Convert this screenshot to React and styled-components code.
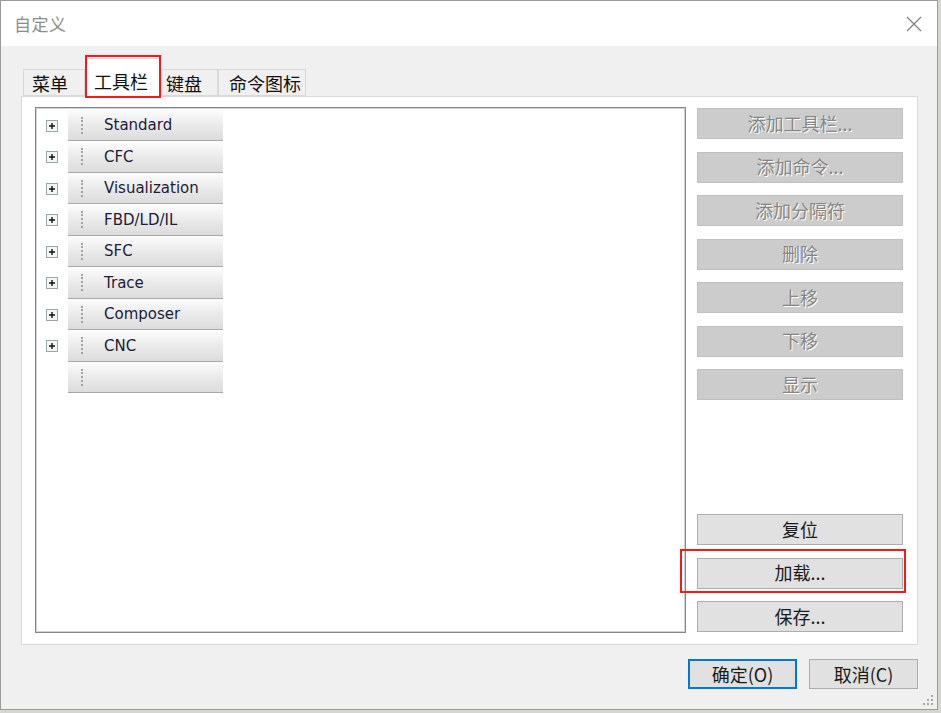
import React from "react";
import styled, { createGlobalStyle } from "styled-components";

const tabs = [
  { label: "菜单", width: 62, pad: 8 },
  { label: "工具栏", width: 76, pad: 8, active: true },
  { label: "键盘", width: 57, pad: 4 },
  { label: "命令图标", width: 88, pad: 10 },
];
const toolbars = ["Standard", "CFC", "Visualization", "FBD/LD/IL", "SFC", "Trace", "Composer", "CNC", ""];
const topActions = ["添加工具栏...", "添加命令...", "添加分隔符", "删除", "上移", "下移", "显示"];

export default function App() {
  return (
    <>
      <GlobalStyle />
      <Window>
        <TitleBar>
          <Title>自定义</Title>
          <CloseIcon viewBox="0 0 16 16">
            <path d="M1 1 L15 15 M15 1 L1 15" stroke="#7a7a7a" strokeWidth="1.1" fill="none" />
          </CloseIcon>
        </TitleBar>
        <Body>
          <TabRow>
            {tabs.map((t) => (
              <Tab key={t.label} $active={t.active} $width={t.width} $pad={t.pad}>
                {t.label}
                {t.active && <Highlight $inset="-4px -1px -1px -1px" />}
              </Tab>
            ))}
          </TabRow>
          <Panel>
            <TreeBox>
              {toolbars.map((name, i) => (
                <TreeRow key={i}>
                  <Expander>{name && <PlusIcon />}</Expander>
                  <ToolbarBar>
                    <Grip />
                    <BarLabel>{name}</BarLabel>
                  </ToolbarBar>
                </TreeRow>
              ))}
            </TreeBox>
            <ActionColumn>
              <ActionGroup>
                {topActions.map((label) => (
                  <ActionButton key={label} disabled>
                    {label}
                  </ActionButton>
                ))}
              </ActionGroup>
              <ActionGroup>
                <ActionButton>复位</ActionButton>
                <ActionButton>
                  加载...
                  <Highlight $inset="-10px -4px -5px -18px" />
                </ActionButton>
                <ActionButton>保存...</ActionButton>
              </ActionGroup>
            </ActionColumn>
          </Panel>
          <Footer>
            <DialogButton $default>确定(O)</DialogButton>
            <DialogButton>取消(C)</DialogButton>
          </Footer>
        </Body>
        <ResizeGrip viewBox="0 0 12 12">
          {[
            [9, 1],
            [9, 5],
            [5, 5],
            [9, 9],
            [5, 9],
            [1, 9],
          ].map(([x, y]) => (
            <rect key={`${x}-${y}`} x={x} y={y} width="2" height="2" fill="#a8a8a8" />
          ))}
        </ResizeGrip>
      </Window>
    </>
  );
}

function PlusIcon() {
  return (
    <svg width="12" height="12" viewBox="0 0 12 12">
      <rect x="0.5" y="0.5" width="11" height="11" fill="#f4f6f6" stroke="#98a8a8" />
      <path d="M3 6 H9 M6 3 V9" stroke="#111" strokeWidth="1.4" />
    </svg>
  );
}

const GlobalStyle = createGlobalStyle`
  html, body {
    margin: 0;
    padding: 0;
    background: #d6d6d0;
  }
  body {
    font-family: "Noto Sans CJK SC", "Noto Sans", sans-serif;
  }
`;

const Window = styled.div`
  position: relative;
  width: 938px;
  height: 710px;
  box-sizing: border-box;
  border: 1px solid #9a9a9a;
  background: #f0f0f0;
  display: flex;
  flex-direction: column;
`;

const TitleBar = styled.div`
  height: 45px;
  flex: none;
  background: #fff;
  display: flex;
  align-items: center;
  justify-content: space-between;
  padding: 0 15px 0 13px;
`;

const Title = styled.div`
  font-size: 17px;
  color: #8c8c8c;
  letter-spacing: 0.5px;
`;

const CloseIcon = styled.svg`
  width: 16px;
  height: 16px;
`;

const Body = styled.div`
  flex: 1;
  display: flex;
  flex-direction: column;
  padding: 12px 19px 0 20px;
`;

const TabRow = styled.div`
  display: flex;
  align-items: flex-end;
  padding-left: 2px;
  height: 39px;
  position: relative;
  z-index: 1;
  margin-bottom: -1px;
`;

const Tab = styled.div`
  position: relative;
  box-sizing: border-box;
  width: ${(p) => p.$width}px;
  height: ${(p) => (p.$active ? "39px" : "27px")};
  margin-bottom: ${(p) => (p.$active ? "0" : "1px")};
  padding: ${(p) => (p.$active ? "6px" : "0")} 0 0 ${(p) => p.$pad}px;
  background: ${(p) => (p.$active ? "#fff" : "#f0f0f0")};
  border: 1px solid #d9d9d9;
  border-bottom: ${(p) => (p.$active ? "none" : "1px solid #d9d9d9")};
  font-size: 18px;
  color: #111;
  display: flex;
  align-items: center;
  z-index: ${(p) => (p.$active ? 2 : 1)};
`;

const Highlight = styled.span`
  position: absolute;
  inset: ${(p) => p.$inset};
  border: 2px solid #f41a1a;
  pointer-events: none;
`;

const Panel = styled.div`
  box-sizing: border-box;
  height: 549px;
  background: #fff;
  border: 1px solid #d9d9d9;
  display: flex;
  gap: 11px;
  padding: 10px 14px 11px 13px;
`;

const TreeBox = styled.div`
  width: 651px;
  box-sizing: border-box;
  border: 1px solid #828790;
  box-shadow: inset 0 0 0 1px #cfd1d4;
  padding: 2px 0 0 0;
  display: flex;
  flex-direction: column;
  gap: 0.5px;
`;

const TreeRow = styled.div`
  display: flex;
  align-items: center;
  height: 31px;
`;

const Expander = styled.div`
  box-sizing: border-box;
  width: 32px;
  padding-left: 10px;
  display: flex;
  align-items: center;
  svg {
    display: block;
  }
`;

const ToolbarBar = styled.div`
  width: 155px;
  height: 31px;
  box-sizing: border-box;
  background: linear-gradient(#fcfcfc, #e9e9e9 55%, #dcdcdc);
  border-bottom: 1px solid #a8a8a8;
  display: flex;
  align-items: center;
`;

const Grip = styled.div`
  width: 0;
  height: 17px;
  margin-left: 13px;
  border-left: 2px dotted #a3a3a3;
`;

const BarLabel = styled.span`
  margin-left: 21px;
  font-family: "DejaVu Sans", Verdana, sans-serif;
  font-size: 15px;
  color: #1c1c3c;
`;

const ActionColumn = styled.div`
  width: 206px;
  display: flex;
  flex-direction: column;
  justify-content: space-between;
  padding-top: 1px;
  padding-bottom: 1px;
`;

const ActionGroup = styled.div`
  display: flex;
  flex-direction: column;
  gap: 12.5px;
`;

const ActionButton = styled.button`
  position: relative;
  height: 31px;
  box-sizing: border-box;
  padding: 0 0 2px;
  font-family: "Noto Sans CJK SC", "Noto Sans", sans-serif;
  font-size: 18px;
  background: #e1e1e1;
  border: 1px solid #adadad;
  color: #1a1a1a;
  &:disabled {
    background: #cccccc;
    border-color: #bfbfbf;
    color: #858585;
    text-shadow: 1px 1px 0 #ffffff;
  }
`;

const Footer = styled.div`
  display: flex;
  justify-content: flex-end;
  gap: 12px;
  padding-top: 14px;
`;

const DialogButton = styled.button`
  width: 109px;
  height: 30px;
  box-sizing: border-box;
  padding: 0;
  font-family: "Noto Sans CJK SC", "Noto Sans", sans-serif;
  font-size: 18px;
  color: #1a1a1a;
  background: #e1e1e1;
  border: ${(p) => (p.$default ? "2px solid #0078d7" : "1px solid #adadad")};
`;

const ResizeGrip = styled.svg`
  position: absolute;
  right: 3px;
  bottom: 3px;
  width: 12px;
  height: 12px;
`;
